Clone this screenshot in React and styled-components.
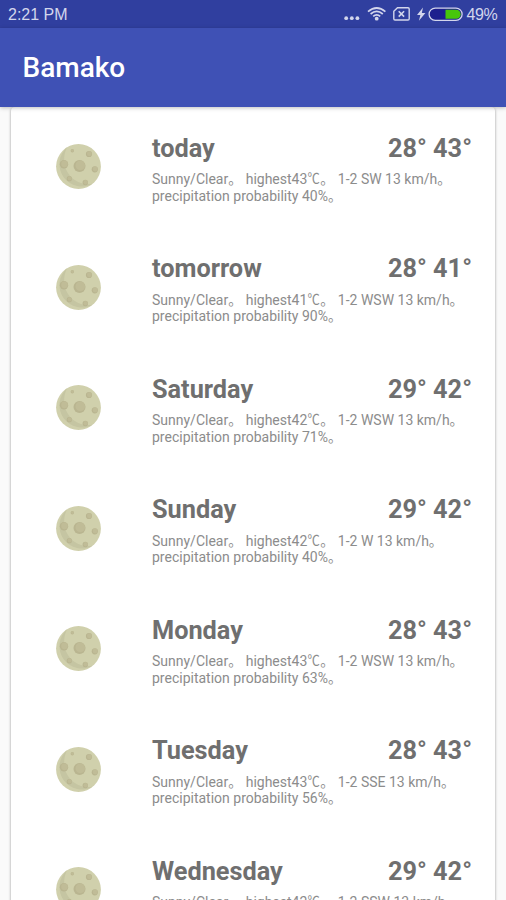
import React from "react";
import styled, { createGlobalStyle } from "styled-components";

const GlobalStyle = createGlobalStyle`
	* {
		box-sizing: border-box;
	}

	body {
		margin: 0;
		background-color: #fafafa;
		font-family: Roboto, "Noto Sans CJK SC", sans-serif;
	}
`;

const forecast = [
	{ day: "today", low: 28, high: 43, wind: "SW", rain: 40 },
	{ day: "tomorrow", low: 28, high: 41, wind: "WSW", rain: 90 },
	{ day: "Saturday", low: 29, high: 42, wind: "WSW", rain: 71 },
	{ day: "Sunday", low: 29, high: 42, wind: "W", rain: 40 },
	{ day: "Monday", low: 28, high: 43, wind: "WSW", rain: 63 },
	{ day: "Tuesday", low: 28, high: 43, wind: "SSE", rain: 56 },
	{ day: "Wednesday", low: 29, high: 42, wind: "SSW", rain: 40 },
];

const craters = [
	{ x: 16.3, y: 6.7, r: 1.7 },
	{ x: 33, y: 10, r: 3.1 },
	{ x: 8, y: 20.2, r: 4.2 },
	{ x: 23.5, y: 22, r: 6 },
	{ x: 38.8, y: 25.3, r: 3.1 },
	{ x: 13.3, y: 34.7, r: 2.6 },
	{ x: 29.3, y: 38.5, r: 2.7 },
];

function MoonIcon() {
	return (
		<Moon viewBox="0 0 45 45">
			<circle cx="22.5" cy="22.5" r="22.4" fill="#d0d0ac" />
			<path d="M11 3.3A22.4 22.4 0 0 0 37 39.5C19 43.5 1 25 11 3.3Z" fill="#c5c5a2" />
			{craters.map((c) => (
				<g key={c.x}>
					<circle cx={c.x} cy={c.y} r={c.r} fill="#b9b590" />
					<circle cx={c.x + c.r * 0.13} cy={c.y - c.r * 0.1} r={c.r * 0.8} fill="#c0bc97" />
				</g>
			))}
		</Moon>
	);
}

function StatusIcons() {
	return (
		<svg width="121" height="28" viewBox="342 0 121 28" fill="none" stroke="#d3d6ec">
			<g fill="#d3d6ec" stroke="none">
				<circle cx="346.2" cy="18.2" r="1.9" />
				<circle cx="351.8" cy="18.2" r="1.9" />
				<circle cx="357.4" cy="18.2" r="1.9" />
				<circle cx="376.7" cy="18.7" r="1.9" />
				<path d="M423 7.5L417 15h3.4l-1.5 5.7 6.5-7.6h-3.6z" />
			</g>
			<g strokeWidth="1.7">
				<path d="M368 11.6Q376.7 4.4 385.4 11.6" />
				<path d="M370.6 14Q376.7 8.8 382.8 14" />
				<path d="M373.2 16.4Q376.7 13.3 380.2 16.4" />
			</g>
			<path d="M397.5 7.8H408a1.2 1.2 0 0 1 1.2 1.2v9.8a1.2 1.2 0 0 1-1.2 1.2H395a1.2 1.2 0 0 1-1.2-1.2v-7.5z" strokeWidth="1.4" />
			<path d="M398.7 11.2l5.4 5.4M404.1 11.2l-5.4 5.4" strokeWidth="1.6" />
			<rect x="429.1" y="8.1" width="33" height="12.2" rx="6.1" fill="#1d1f8e" strokeWidth="1.3" />
			<path d="M445.5 9.7h10.7a4.5 4.5 0 0 1 0 9h-10.7z" fill="#47c60a" stroke="none" />
		</svg>
	);
}

function ForecastRow({ day, low, high, wind, rain }) {
	return (
		<Row>
			<MoonIcon />
			<Details>
				<Heading>
					<span>{day}</span>
					<span>
						{low}° {high}°
					</span>
				</Heading>
				<Description>
					Sunny/Clear。 highest{high}
					<Unit>℃</Unit>。 1-2 {wind} 13 km/h。
					<br />
					precipitation probability {rain}%。
				</Description>
			</Details>
		</Row>
	);
}

function App() {
	return (
		<Screen>
			<GlobalStyle />
			<StatusBar>
				<Clock>2:21 PM</Clock>
				<StatusIcons />
				<BatteryLevel>49%</BatteryLevel>
			</StatusBar>
			<Toolbar>Bamako</Toolbar>
			<Card>
				{forecast.map((item) => (
					<ForecastRow key={item.day} {...item} />
				))}
			</Card>
		</Screen>
	);
}

export default App;

const Screen = styled.div`
	height: 900px;
	overflow: hidden;
	display: flex;
	flex-direction: column;
`;

const StatusBar = styled.div`
	height: 28px;
	flex-shrink: 0;
	padding-left: 8px;
	display: flex;
	align-items: center;
	background-color: #303f9f;
	color: #d3d6ec;
	font-family: "Liberation Sans", sans-serif;
	font-size: 16px;
`;

const Clock = styled.span`
	flex: 0 0 334px;
	padding-top: 2px;
`;

const BatteryLevel = styled.span`
	padding: 2px 0 0 3.5px;
	letter-spacing: -0.4px;
`;

const Toolbar = styled.header`
	height: 79px;
	flex-shrink: 0;
	padding-left: 22.5px;
	display: flex;
	align-items: center;
	background-color: #3f51b5;
	color: white;
	font-size: 28px;
	font-weight: 500;
	box-shadow: 0 1px 4px rgba(0, 0, 0, 0.25);
	z-index: 1;
`;

const Card = styled.main`
	flex-shrink: 0;
	margin: 0 11px;
	background-color: white;
	border-radius: 4px;
	box-shadow: 0 1px 3px rgba(0, 0, 0, 0.4);
`;

const Row = styled.section`
	height: 120.5px;
	padding: 25.6px 23px 0 45px;
	display: flex;
	align-items: flex-start;
`;

const Moon = styled.svg`
	width: 45px;
	height: 45px;
	margin: 11.5px 51px 0 0;
	flex-shrink: 0;
`;

const Details = styled.div`
	flex: 1;
`;

const Heading = styled.h2`
	margin: 0;
	display: flex;
	justify-content: space-between;
	color: #6f6f6f;
	font-size: 25.3px;
	font-weight: 700;
	line-height: 32px;
`;

const Description = styled.p`
	margin: 6.5px 0 0;
	color: #8c8c8c;
	font-size: 14px;
	line-height: 16.5px;
	white-space: nowrap;
`;

/* the full-width degree sign is condensed to sit closer to the digits */
const Unit = styled.span`
	display: inline-block;
	width: 13px;
	line-height: 1;
	transform: translate(0.4px, -0.6px) scaleX(0.88);
	transform-origin: left;
`;
